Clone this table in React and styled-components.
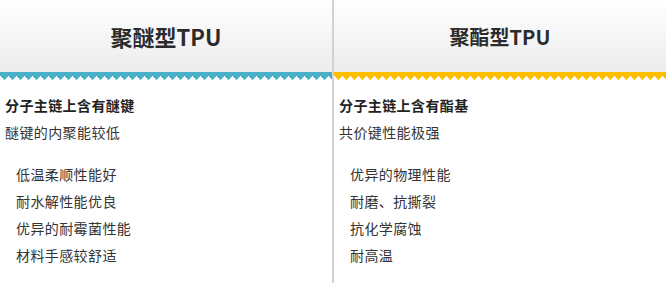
import React from 'react';
import styled, { createGlobalStyle } from 'styled-components';

const GlobalStyle = createGlobalStyle`
  html, body {
    margin: 0;
    padding: 0;
    background: #fff;
  }
  body {
    font-family: "Noto Sans CJK SC", "Noto Sans", sans-serif;
    color: #333;
  }
`;

const columns = [
  {
    title: '聚醚型TPU',
    size: 22,
    color: '#4aafc6',
    heading: '分子主链上含有醚键',
    sub: '醚键的内聚能较低',
    items: ['低温柔顺性能好', '耐水解性能优良', '优异的耐霉菌性能', '材料手感较舒适'],
  },
  {
    title: '聚酯型TPU',
    size: 20,
    color: '#fdbf00',
    heading: '分子主链上含有酯基',
    sub: '共价键性能极强',
    items: ['优异的物理性能', '耐磨、抗撕裂', '抗化学腐蚀', '耐高温'],
  },
];

export default function App() {
  return (
    <>
      <GlobalStyle />
      <Page>
        {columns.map((col, i) => (
          <Column key={col.title} first={i === 0}>
            <Header>
              <Title size={col.size}>{col.title}</Title>
            </Header>
            <Teeth color={col.color} />
            <Body>
              <Heading>{col.heading}</Heading>
              <Sub>{col.sub}</Sub>
              <List>
                {col.items.map((item) => (
                  <Item key={item}>{item}</Item>
                ))}
              </List>
            </Body>
          </Column>
        ))}
      </Page>
    </>
  );
}

const Page = styled.div`
  display: flex;
  width: 666px;
  height: 283px;
  overflow: hidden;
`;

const Column = styled.div`
  flex: ${(p) => (p.first ? '0 0 332px' : '1')};
  display: flex;
  flex-direction: column;
  background: #fff;
  ${(p) =>
    p.first &&
    `
    border-right: 2px solid #d2d2d2;
    box-shadow: 1px 0 1px rgba(0, 0, 0, 0.08);
  `}
`;

const Header = styled.div`
  height: 72px;
  display: flex;
  align-items: center;
  justify-content: center;
  background: linear-gradient(#ffffff, #ececec);
`;

const Title = styled.h2`
  margin: 0;
  font-size: ${(p) => p.size}px;
  font-weight: 700;
  color: #2b2b2b;
`;

const Teeth = styled.div`
  height: 8px;
  background-color: ${(p) => p.color};
  background-image: linear-gradient(45deg, #fff 25%, transparent 25%),
    linear-gradient(-45deg, #fff 25%, transparent 25%);
  background-size: 8px 8px;
  background-position: 0 0;
`;

const Body = styled.div`
  padding: 12px 0 0 5px;
  font-size: 14px;
  line-height: 27px;
  letter-spacing: 0.4px;
`;

const Heading = styled.div`
  font-weight: 700;
  color: #222;
`;

const Sub = styled.div`
  color: #333;
`;

const List = styled.ul`
  list-style: none;
  margin: 15px 0 0;
  padding: 0 0 0 11px;
`;

const Item = styled.li`
  color: #333;
`;
